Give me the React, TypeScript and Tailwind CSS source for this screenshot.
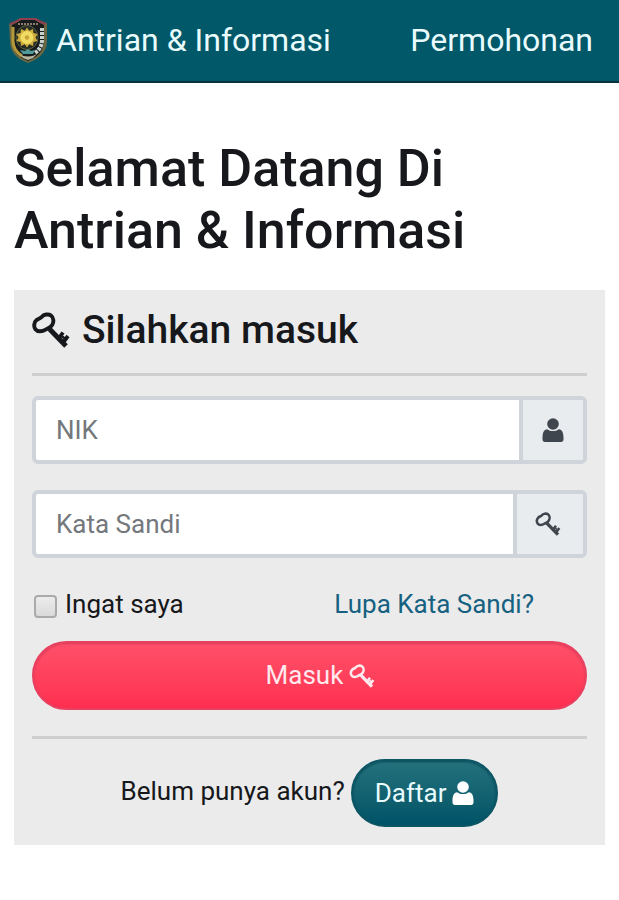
import { useState } from 'react'

function KeyIcon({ className }: { className: string }) {
  return (
    <svg viewBox="0 0 38 36" fill="none" stroke="currentColor" className={className} aria-hidden="true">
      <path
        d="M9.800 4.800C11.600 2.400 16.500 1.600 19 3.500 21.800 5.600 22 10 20.200 13 18.500 15.800 15.800 16.400 13.600 17.600 10.400 19.600 5.600 20.200 3.400 17.300 1.400 14.600 2 10.200 4.600 8.100 6.600 6.600 8.400 6.600 9.800 4.800Z"
        strokeWidth="3.900"
      />
      <path d="M17.500 17 34 34" strokeWidth="5" />
      <path d="M27 26 31 20.500M31.500 30 36 24" strokeWidth="3.800" />
      <path d="M29 23.500 34 27.500" strokeWidth="2.400" />
    </svg>
  )
}

function UserIcon({ className }: { className: string }) {
  return (
    <svg viewBox="0 0 22 24" fill="currentColor" className={className} aria-hidden="true">
      <circle cx="11" cy="6" r="5.800" />
      <path d="M5.200 11.200C1.800 11.600.5 14.500.5 20v1.500C.5 23 1.500 24 3 24h16c1.500 0 2.500-1 2.500-2.500V20c0-5.500-1.300-8.400-4.700-8.800C15.200 12.500 13.300 13 11 13s-4.200-.5-5.800-1.800Z" />
    </svg>
  )
}

function Crest() {
  return (
    <svg viewBox="0 0 40 48" className="h-12 w-10 shrink-0" aria-hidden="true">
      <path d="M1 8 6 6 12 2H28L33 5 39 7V25C39 36 31 43 20 47 9 43 2 36 2 25Z" fill="#6b6742" />
      <path d="M4 9 8 7 13 4H27L32 7 36 9V25C36 34 30 41 20 45 10 41 4 34 4 25Z" fill="#171b1c" />
      <path d="M2 8 7 6 13 3H27L33 6 38 8" fill="none" stroke="#8f3d50" strokeWidth="2" />
      <path d="M10 8H30" stroke="#8b7a70" strokeWidth="2" strokeDasharray="2 1" />
      <path d="M5 11V25C5 31 8 36 14 40" fill="none" stroke="#b59a3a" strokeWidth="3" />
      <path d="M34 12V24C34 30 31 34 27 37" fill="none" stroke="#c9d3cd" strokeWidth="4" strokeDasharray="3 1" />
      <ellipse cx="19" cy="21.500" rx="11" ry="12" fill="#252b25" stroke="#5e6440" />
      <path d="m19 11.500 2.200 3.200 3.800-1.700.5 4 4 1-2 3.500 2 3.500-4 1-.5 4-3.800-1.700-2.200 3.200-2.200-3.200L13 30l-.5-4-4-1 2-3.500-2-3.500 4-1 .5-4 3.800 1.700Z" fill="#cfad3c" />
      <circle cx="19" cy="21.500" r="6.500" fill="#f0dc62" />
      <circle cx="19" cy="21.500" r="2.200" fill="#c6a338" />
      <path d="m12 34 5 1 3-2 3 2 4-1-2 4H15Z" fill="#4f9a98" />
      <path d="M11 38Q20 43 29 38L25 42 20 44 15 42Z" fill="#b9b79c" />
    </svg>
  )
}

export default function App() {
  const [nik, setNik] = useState('')
  const [password, setPassword] = useState('')
  const [remember, setRemember] = useState(false)

  return (
    <div className="min-h-screen bg-white font-['Roboto',sans-serif] text-[#16181b]">
      <header className="flex h-[83px] items-center justify-between border-b-2 border-[#06313f] bg-[#005869] pr-[26px] pb-[2px] pl-2 text-[32px] text-[#e9fbfc]">
        <a href="#" className="flex items-center gap-2">
          <Crest />
          Antrian &amp; Informasi
        </a>
        <a href="#permohonan">Permohonan</a>
      </header>

      <main className="px-[14px] pt-[55px]">
        <h1 className="text-[52px] leading-[62px] font-medium">
          Selamat Datang Di
          <br />
          Antrian &amp; Informasi
        </h1>

        <form onSubmit={e => e.preventDefault()} className="mt-7 bg-[#ebebeb] p-[18px]">
          <h2 className="flex items-center gap-3 text-[39px] leading-[44px] font-medium">
            <KeyIcon className="h-9 w-[38px]" />
            Silahkan masuk
          </h2>
          <hr className="mt-[21px] mb-5 border-t-[3px] border-[#cfcfcf]" />

          {/* Credentials */}
          <div className="flex h-[68px] overflow-hidden rounded-md border-4 border-[#ced4da] bg-white">
            <input
              aria-label="NIK"
              placeholder="NIK"
              value={nik}
              onChange={e => setNik(e.target.value)}
              className="min-w-0 flex-1 px-5 text-[26px] outline-none placeholder:text-[#74787c]"
            />
            <span className="flex w-16 items-center justify-center border-l-4 border-[#ced4da] bg-[#e9ecef] text-[#40464d]">
              <UserIcon className="h-6 w-[22px]" />
            </span>
          </div>
          <div className="mt-[26px] flex h-[68px] overflow-hidden rounded-md border-4 border-[#ced4da] bg-white">
            <input
              type="password"
              aria-label="Kata Sandi"
              placeholder="Kata Sandi"
              value={password}
              onChange={e => setPassword(e.target.value)}
              className="min-w-0 flex-1 px-5 text-[26px] outline-none placeholder:text-[#74787c]"
            />
            <span className="flex w-[70px] items-center justify-center border-l-4 border-[#ced4da] bg-[#e9ecef] pr-1 text-[#40464d]">
              <KeyIcon className="h-6 w-[26px]" />
            </span>
          </div>

          <div className="mt-[26px] flex items-center justify-between pr-[53px] text-[26px] leading-10">
            <label className="flex items-center gap-2">
              <input
                type="checkbox"
                checked={remember}
                onChange={e => setRemember(e.target.checked)}
                className="mt-1 ml-[2px] size-[23px] appearance-none rounded-sm border-2 border-[#aaa] bg-linear-to-b from-[#ececec] to-[#dadada] checked:bg-[#005869]"
              />
              Ingat saya
            </label>
            <a href="#lupa" className="text-[#166181]">Lupa Kata Sandi?</a>
          </div>

          <button
            type="submit"
            className="mt-[17px] flex h-[69px] w-full items-center justify-center gap-[6px] rounded-full border-2 border-[#e8405f] bg-linear-to-b from-[#ff5069] to-[#ff2e50] pl-[22px] text-[26px] text-[#ffe9ed] shadow-[inset_0_1px_2px_#d93a59]"
          >
            Masuk
            <KeyIcon className="h-6 w-[26px]" />
          </button>
          <hr className="mt-[26px] mb-5 border-t-[3px] border-[#cfcfcf]" />

          <div className="flex items-center justify-center gap-[6px] text-[26px]">
            <span className="pb-1">Belum punya akun?</span>
            <button
              type="button"
              className="flex h-[68px] items-center gap-[6px] rounded-full border-2 border-[#0b5564] bg-linear-to-b from-[#23727d] to-[#005366] px-[22px] text-[#e9fbfc] shadow-[inset_0_1px_2px_#0b4755]"
            >
              Daftar
              <UserIcon className="h-6 w-[22px] text-white" />
            </button>
          </div>
        </form>
      </main>
    </div>
  )
}
